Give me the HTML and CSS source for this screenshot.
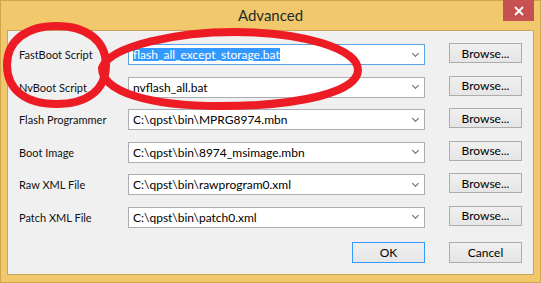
FILE: index.html
```html
<!DOCTYPE html>
<html>
<head>
  <title>Advanced</title>
  <link rel="stylesheet" href="styles.css">
</head>
<body>
  <div class="window">
    <div class="titlebar">
      <span class="title">Advanced</span>
      <button class="close" title="Close">
        <svg width="10" height="10" viewBox="0 0 10 10">
          <path d="M1 1 L9 9 M9 1 L1 9" stroke="#fff" stroke-width="1.8" fill="none"/>
        </svg>
      </button>
    </div>

    <div class="client">
      <div class="fields">
        <label>FastBoot Script</label>
        <div class="combo focused"><span class="selected">flash_all_except_storage.bat</span><i class="arrow"></i></div>
        <button class="btn">Browse...</button>

        <label>NvBoot Script</label>
        <div class="combo"><span>nvflash_all.bat</span><i class="arrow"></i></div>
        <button class="btn">Browse...</button>

        <label>Flash Programmer</label>
        <div class="combo"><span>C:\qpst\bin\MPRG8974.mbn</span><i class="arrow"></i></div>
        <button class="btn">Browse...</button>

        <label>Boot Image</label>
        <div class="combo"><span>C:\qpst\bin\8974_msimage.mbn</span><i class="arrow"></i></div>
        <button class="btn">Browse...</button>

        <label>Raw XML File</label>
        <div class="combo"><span>C:\qpst\bin\rawprogram0.xml</span><i class="arrow"></i></div>
        <button class="btn">Browse...</button>

        <label>Patch XML File</label>
        <div class="combo"><span>C:\qpst\bin\patch0.xml</span><i class="arrow"></i></div>
        <button class="btn">Browse...</button>
      </div>

      <div class="actions">
        <button class="btn default">OK</button>
        <button class="btn">Cancel</button>
      </div>
    </div>

    <!-- hand drawn red marks over the dialog -->
    <svg class="marks" width="541" height="283" viewBox="0 0 541 283">
      <path d="M56.5 26 C87 26 106 41 106 65 C106 90 87 104 56.5 104 C26 104 7 90 7 65 C7 41 26 26 56.5 26 Z"
            fill="none" stroke="#ed1c24" stroke-width="8"/>
      <path d="M102 68 C110 45 180 32 235 32 C300 32 358 48 358 70 C358 92 300 106 220 106 C150 106 102 92 102 68 Z"
            fill="none" stroke="#ed1c24" stroke-width="8"/>
    </svg>
  </div>
</body>
</html>
```

FILE: styles.css
```css
body {
  margin: 0;
  overflow: hidden;
  font-family: Lato, "Liberation Sans", sans-serif;
  font-size: 12px;
  color: #000;
}

.window {
  position: relative;
  width: 541px;
  height: 283px;
  box-sizing: border-box;
  background-color: #f1c86b;
  border: 1px solid #d0a64c;
}

.titlebar {
  display: grid;
  grid-template-columns: 1fr auto 1fr;
  height: 29px;
}

.title {
  grid-column: 2;
  line-height: 29px;
  font-size: 15px;
  color: #252b2b;
}

.close {
  grid-column: 3;
  justify-self: end;
  align-self: start;
  width: 31px;
  height: 21px;
  margin: -1px 6px 0 0;
  padding: 0;
  border: none;
  background-color: #c75050;
  display: flex;
  align-items: center;
  justify-content: center;
}

.client {
  margin: 0 6px;
  height: 245px;
  box-sizing: border-box;
  background-color: #f0f0f0;
  border: 1px solid #c9a558;
  padding: 13px 11px 0 11px;
}

.fields {
  display: grid;
  grid-template-columns: 85px 297px 73px;
  grid-auto-rows: 21px;
  column-gap: 24px;
  row-gap: 11.6px;
  align-items: center;
}

label {
  font-size: 11px;
  color: #111;
  white-space: nowrap;
}

.combo {
  height: 21px;
  box-sizing: border-box;
  border: 1px solid #abadb3;
  background-color: #fff;
  display: flex;
  align-items: center;
  padding: 0 4px 0 4px;
}

.combo span {
  flex: 1;
  white-space: nowrap;
}

.combo.focused {
  border-color: #5ca2e6;
}

.combo .selected {
  flex: 0 0 auto;
  display: inline-block;
  line-height: 13px;
  background-color: #3399ff;
  color: #fff;
}

.combo.focused .arrow {
  margin-left: auto;
}

.arrow {
  width: 4px;
  height: 4px;
  border-right: 1.5px solid #666;
  border-bottom: 1.5px solid #666;
  transform: rotate(45deg);
  margin: -3px 2px 0 0;
}

.btn {
  height: 21px;
  padding: 0;
  font-family: inherit;
  font-size: 12px;
  color: #000;
  border: 1px solid #acacac;
  background: linear-gradient(#f0f0f0, #e5e5e5);
}

.fields .btn {
  height: 20px;
  align-self: start;
  margin-top: -1px;
}

.actions {
  display: flex;
  justify-content: flex-end;
  gap: 24px;
  margin-top: 14px;
}

.actions .btn {
  width: 73px;
}

.btn.default {
  border-color: #3399ff;
}

.marks {
  position: absolute;
  left: -1px;
  top: -1px;
  pointer-events: none;
}
```
